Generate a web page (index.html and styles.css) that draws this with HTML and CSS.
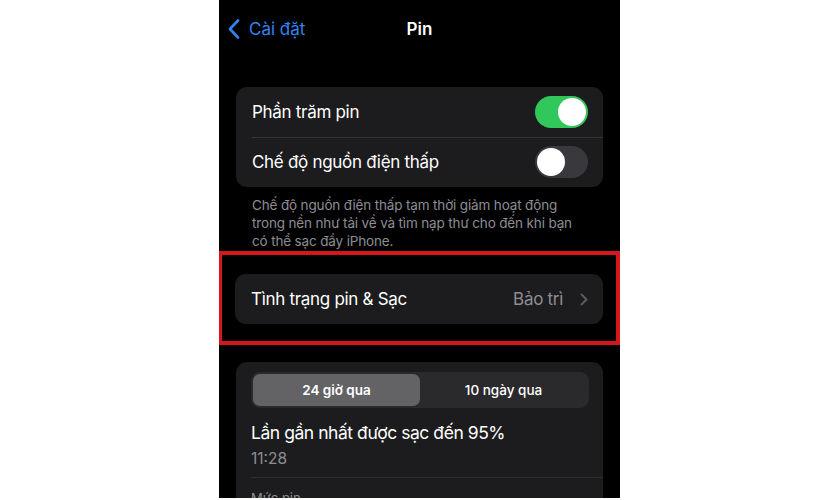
FILE: index.html
```html
<!DOCTYPE html>
<html lang="vi">
<head>
<meta charset="utf-8">
<title>Pin</title>
<link rel="stylesheet" href="styles.css">
</head>
<body>
<div class="stage">
  <div class="phone">
    <header class="nav">
      <a class="back">
        <svg class="back-icon" width="12" height="20" viewBox="0 0 12 20"><path d="M10 1.5 L2 10 L10 18.5" fill="none" stroke="currentColor" stroke-width="2.6" stroke-linecap="round" stroke-linejoin="round"/></svg>
        <span>Cài đặt</span>
      </a>
      <h1 class="title">Pin</h1>
      <span></span>
    </header>

    <section class="card">
      <div class="row">
        <span class="label">Phần trăm pin</span>
        <span class="toggle on"><span class="knob"></span></span>
      </div>
      <div class="row">
        <span class="label">Chế độ nguồn điện thấp</span>
        <span class="toggle"><span class="knob"></span></span>
      </div>
    </section>
    <p class="footnote">Chế độ nguồn điện thấp tạm thời giảm hoạt động<br>trong nền như tải về và tìm nạp thư cho đến khi bạn<br>có thể sạc đầy iPhone.</p>

    <div class="highlight">
      <section class="card">
        <div class="row">
          <span class="label">Tình trạng pin &amp; Sạc</span>
          <span class="value">Bảo trì
            <svg class="chev" width="8" height="13" viewBox="0 0 8 13"><path d="M1.5 1.5 L6.5 6.5 L1.5 11.5" fill="none" stroke="currentColor" stroke-width="2" stroke-linecap="round" stroke-linejoin="round"/></svg>
          </span>
        </div>
      </section>
    </div>

    <section class="card usage">
      <div class="segmented">
        <span class="seg active">24 giờ qua</span>
        <span class="seg">10 ngày qua</span>
      </div>
      <div class="charge">
        <div class="charge-title">Lần gần nhất được sạc đến 95%</div>
        <div class="charge-time">11:28</div>
      </div>
      <div class="next">Mức pin</div>
    </section>
  </div>
</div>
</body>
</html>
```

FILE: styles.css
```css
html, body {
  margin: 0;
  padding: 0;
  background: #ffffff;
}
body {
  font-family: Inter, "Noto Sans", "DejaVu Sans", sans-serif;
  color: #ffffff;
}
.stage {
  width: 840px;
  height: 500px;
  overflow: hidden;
}
.phone {
  margin-left: 219px;
  width: 401px;
  height: 498px;
  background: #000000;
  padding: 0 17px;
  box-sizing: border-box;
  overflow: hidden;
  display: flex;
  flex-direction: column;
}
.phone > * {
  flex: none;
}
.nav {
  display: grid;
  grid-template-columns: 1fr auto 1fr;
  align-items: center;
  height: 58px;
  margin: 0 -8px 29px -8px;
}
.back {
  display: flex;
  align-items: center;
  gap: 9px;
  color: #3184f4;
  font-size: 17px;
}
.back-icon {
  display: block;
}
.title {
  margin: 0;
  font-size: 17px;
  font-weight: 600;
}
.card {
  background: #1c1c1e;
  border-radius: 11px;
  overflow: hidden;
}
.row {
  height: 50px;
  display: flex;
  align-items: center;
  justify-content: space-between;
  padding: 0 15px 0 16px;
  position: relative;
}
.row + .row::before {
  content: "";
  position: absolute;
  top: 0;
  left: 16px;
  right: 0;
  height: 1px;
  background: #333336;
}
.label {
  font-size: 17px;
  letter-spacing: -0.3px;
}
.toggle {
  width: 53px;
  height: 32px;
  border-radius: 16px;
  background: #39393d;
  display: flex;
  align-items: center;
  padding: 0 2px;
  box-sizing: border-box;
}
.toggle.on {
  background: #32c75a;
  justify-content: flex-end;
}
.knob {
  width: 28px;
  height: 28px;
  border-radius: 50%;
  background: #ffffff;
}
.footnote {
  margin: 9px 0 0 0;
  padding: 0 16px;
  font-size: 13.5px;
  line-height: 18px;
  color: #8d8d93;
  letter-spacing: -0.15px;
}
.highlight {
  margin: 1px -17px 0 -18px;
  border: 4px solid #d5161c;
  padding: 19px 13px 17px 13px;
  height: 94px;
  box-sizing: border-box;
}
.value {
  display: flex;
  align-items: center;
  gap: 17px;
  font-size: 17px;
  color: #8d8d93;
  letter-spacing: -0.3px;
}
.chev {
  color: #5b5b60;
  display: block;
}
.usage {
  margin-top: 17px;
  padding: 10px 14px 0 15px;
  border-radius: 11px 11px 0 0;
  overflow: visible;
}
.segmented {
  height: 36px;
  border-radius: 9px;
  background: #2a2a2c;
  padding: 2px;
  box-sizing: border-box;
  display: grid;
  grid-template-columns: 1fr 1fr;
}
.seg {
  display: flex;
  align-items: center;
  justify-content: center;
  font-size: 13.5px;
  font-weight: 600;
  border-radius: 7px;
}
.seg.active {
  background: #636366;
}
.seg + .seg {
  font-weight: 500;
}
.charge {
  padding: 13px 0 8px 0;
  border-bottom: 1px solid #2e2e31;
  margin-right: -14px;
}
.charge-title {
  font-size: 17.5px;
  line-height: 24px;
  letter-spacing: -0.45px;
}
.charge-time {
  font-size: 15.5px;
  line-height: 21px;
  color: #8d8d93;
  margin-top: 3px;
}
.next {
  padding-top: 12px;
  font-size: 13px;
  color: #8d8d93;
}
```
